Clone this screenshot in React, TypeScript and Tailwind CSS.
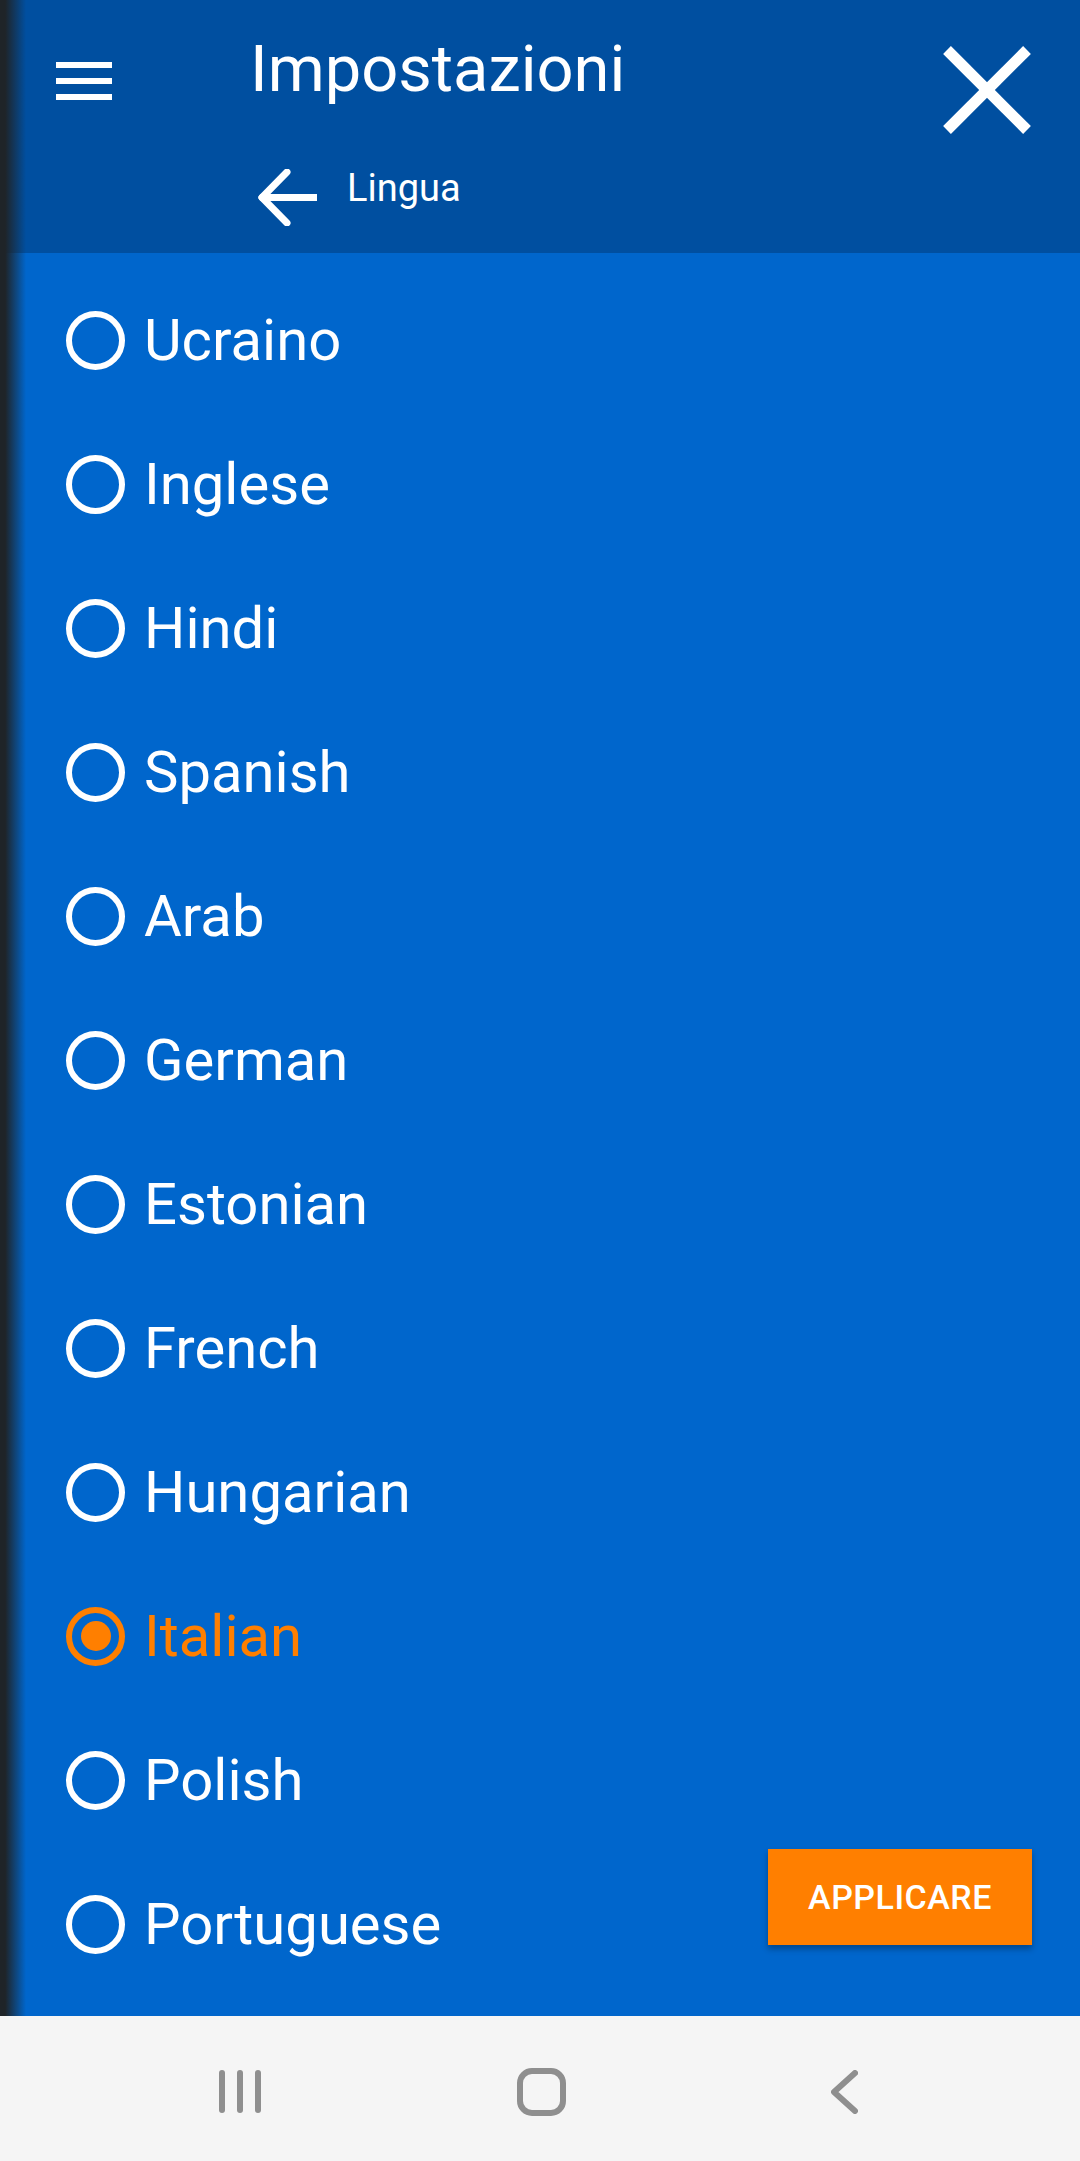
import React from "react";

const languages = [
  "Ucraino",
  "Inglese",
  "Hindi",
  "Spanish",
  "Arab",
  "German",
  "Estonian",
  "French",
  "Hungarian",
  "Italian",
  "Polish",
  "Portuguese",
];

const selected = "Italian";

function Radio({ checked }: { checked: boolean }) {
  if (checked) {
    return (
      <span className="flex h-[59px] w-[59px] shrink-0 items-center justify-center rounded-full border-[6px] border-[#ff7f00]">
        <span className="h-[30px] w-[30px] rounded-full bg-[#ff7f00]" />
      </span>
    );
  }
  return <span className="h-[59px] w-[59px] shrink-0 rounded-full border-[6px] border-white" />;
}

export default function App() {
  return (
    <div className="flex h-[2161px] w-[1080px] flex-col overflow-hidden bg-[#0066cc] font-['Roboto',sans-serif]">
      <div className="relative flex min-h-0 flex-1 flex-col">
        {/* drawer edge shadow */}
        <div className="pointer-events-none absolute inset-y-0 left-0 z-10 w-[26px] bg-linear-to-r from-[#1f2428] from-20% to-transparent" />

        <header className="flex h-[253px] shrink-0 flex-col bg-[#004fa0] text-white">
          <div className="flex items-start">
            <svg className="ml-[56px] mt-[62px] shrink-0" width="56" height="38" viewBox="0 0 56 38">
              <rect x="0" y="0" width="56" height="6" fill="white" />
              <rect x="0" y="16" width="56" height="6" fill="white" />
              <rect x="0" y="32" width="56" height="6" fill="white" />
            </svg>
            <h1 className="ml-[138px] mt-[37px] text-[65px] font-normal leading-[65px]">Impostazioni</h1>
            <svg className="ml-auto mr-[49px] mt-[46px] shrink-0" width="88" height="88" viewBox="0 0 88 88">
              <line x1="4" y1="4" x2="84" y2="84" stroke="white" strokeWidth="11" />
              <line x1="84" y1="4" x2="4" y2="84" stroke="white" strokeWidth="11" />
            </svg>
          </div>
          <div className="mt-[35px] flex items-start pl-[258px]">
            <svg className="shrink-0" width="59" height="57" viewBox="0 0 59 57">
              <line x1="6" y1="28.5" x2="59" y2="28.5" stroke="white" strokeWidth="7" />
              <line x1="4" y1="28.5" x2="29" y2="3" stroke="white" strokeWidth="7" strokeLinecap="round" />
              <line x1="4" y1="28.5" x2="29" y2="54" stroke="white" strokeWidth="7" strokeLinecap="round" />
            </svg>
            <span className="ml-[30px] text-[38px] leading-[38px]">Lingua</span>
          </div>
        </header>

        <ul className="min-h-0 flex-1 overflow-hidden pt-[15px]">
          {languages.map((lang) => {
            const checked = lang === selected;
            return (
              <li key={lang} className="flex h-[144px] items-center gap-[19px] pl-[66px]">
                <Radio checked={checked} />
                <span className={`text-[58px] leading-none ${checked ? "text-[#ff7f00]" : "text-white"}`}>{lang}</span>
              </li>
            );
          })}
        </ul>

        <button
          type="button"
          className="absolute bottom-[71px] right-[48px] h-[96px] w-[264px] bg-[#ff7f00] text-[34px] font-medium tracking-[0.5px] text-white shadow-[0_4px_6px_rgba(0,0,0,0.3)]"
        >
          APPLICARE
        </button>
      </div>

      <nav className="flex h-[145px] shrink-0 items-center bg-[#f5f5f5] pt-[6px]">
        <div className="flex w-full items-center">
          <svg className="ml-[219px] shrink-0" width="42" height="43" viewBox="0 0 42 43">
            <line x1="3" y1="3" x2="3" y2="40" stroke="#8f8f8f" strokeWidth="6" strokeLinecap="round" />
            <line x1="21" y1="3" x2="21" y2="40" stroke="#8f8f8f" strokeWidth="6" strokeLinecap="round" />
            <line x1="39" y1="3" x2="39" y2="40" stroke="#8f8f8f" strokeWidth="6" strokeLinecap="round" />
          </svg>
          <div className="ml-[256px] h-[48px] w-[49px] shrink-0 rounded-[15px] border-[6px] border-[#8f8f8f]" />
          <svg className="ml-[265px] shrink-0" width="27" height="44" viewBox="0 0 27 44">
            <polyline points="24,3 3,22 24,41" fill="none" stroke="#8f8f8f" strokeWidth="6" strokeLinecap="round" strokeLinejoin="round" />
          </svg>
        </div>
      </nav>
    </div>
  );
}
